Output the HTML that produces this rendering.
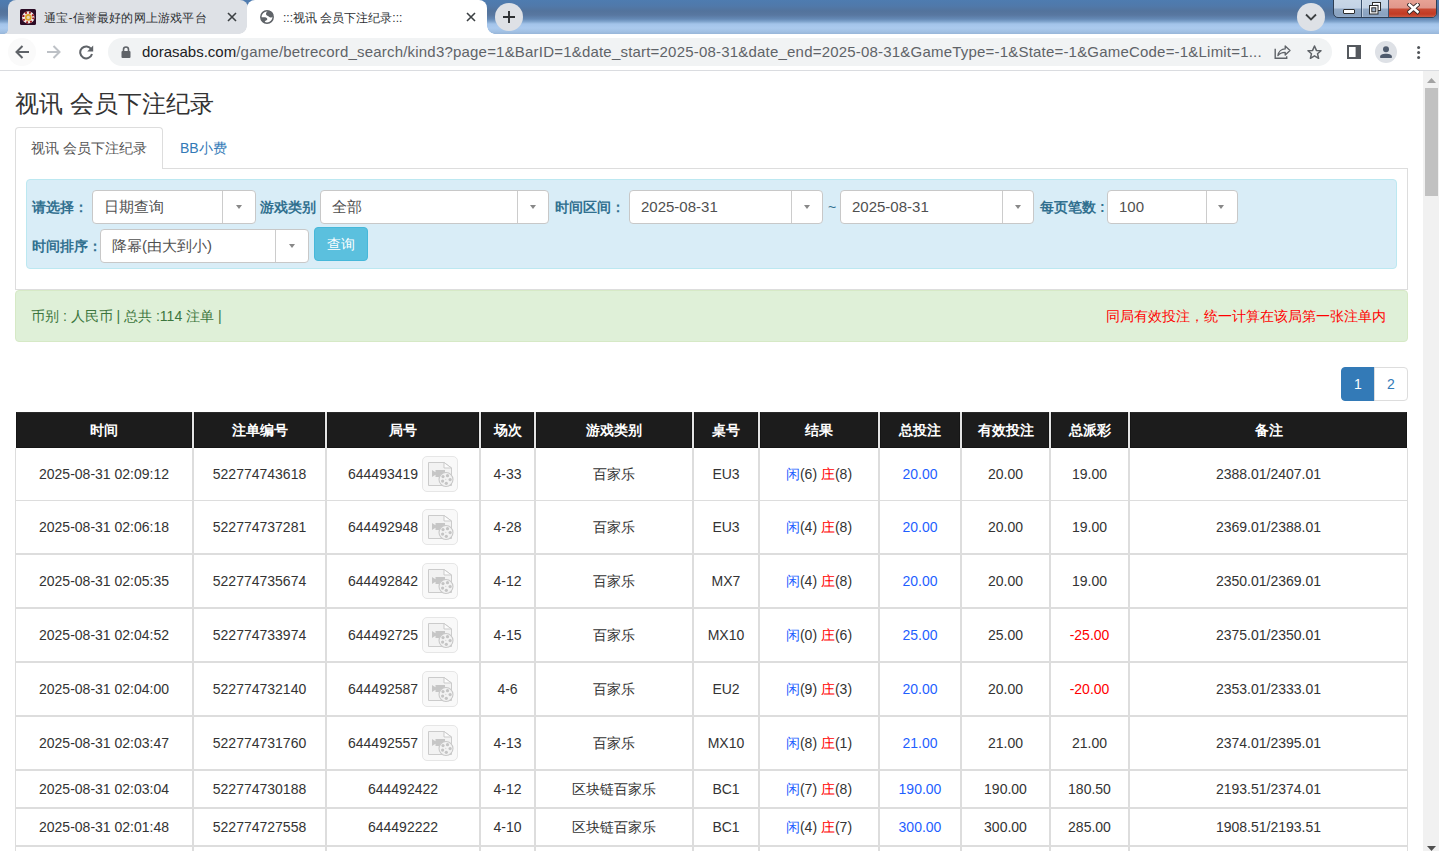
<!DOCTYPE html>
<html><head><meta charset="utf-8">
<style>
*{box-sizing:border-box;margin:0;padding:0}
html,body{width:1439px;height:851px;overflow:hidden;background:#fff;font-family:"Liberation Sans",sans-serif;color:#333}
.a{position:absolute}
#strip{left:0;top:0;width:1439px;height:34px;background:linear-gradient(to bottom,#4e7cb0 0px,#5079aa 6px,#53739c 11px,#5877a0 15px,#6489b5 19px,#7fa3cc 21.5px,#a3c4ea 24px,#abcaee 28px,#a0bfe2 32px,#97b5d8 34px)}
.tab{top:0;height:34px;border-radius:8px 8px 0 0}
.tt{position:absolute;font-size:12px;line-height:14px;white-space:nowrap;color:#2d3033}
#toolbar{left:0;top:34px;width:1439px;height:37px;background:#fff;border-bottom:1px solid #dadce0}
#omni{left:108px;top:38px;width:1224px;height:28px;border-radius:14px;background:#f1f3f4}
#url{position:absolute;left:142px;top:43px;font-size:15px;line-height:17px;color:#5f6368;white-space:nowrap;letter-spacing:0.2px}
#url b{font-weight:normal;color:#202124;letter-spacing:0}
#sb{left:1423px;top:71px;width:16px;height:780px;background:#f1f1f1}
.th{position:absolute;background:#1c1c1c;border:1px solid #151515;border-top-color:#2a2a2a;color:#fff;font-weight:bold;font-size:14px;line-height:34px;text-align:center;white-space:nowrap}
.td{position:absolute;display:flex;align-items:center;justify-content:center;font-size:14px;line-height:20px;white-space:nowrap;color:#333}
.vb{position:relative;display:inline-block;width:36px;height:36px;border:1px solid #e6e6e6;border-radius:5px;background:#f9f9f9;vertical-align:middle;margin-left:0}
.bl{color:#1f5fff}
.rd{color:#f00}
.lbl{position:absolute;font-weight:bold;font-size:14px;line-height:20px;color:#31708f;white-space:nowrap}
.sel{position:absolute;height:34px;border:1px solid #c8c8c8;border-radius:4px;background:#fff}
.sel .v{position:absolute;left:11px;top:7px;font-size:15px;line-height:18px;color:#505050;white-space:nowrap}
.sel .sep{position:absolute;top:0;bottom:0;width:1px;background:#ccc}
.sel .arr{position:absolute;top:14px;width:0;height:0;border-left:3.5px solid transparent;border-right:3.5px solid transparent;border-top:4px solid #888}
</style></head><body>
<div id="strip" class="a"></div>
<!-- inactive tab -->
<div class="a tab" style="left:8px;width:240px;background:#dee1e6"></div>
<div class="a" style="left:4px;top:30px;width:4px;height:4px;background:radial-gradient(circle at 0px 0px,transparent 3.5px,#dee1e6 4px)"></div>
<svg class="a" style="left:20px;top:9px" width="16" height="16" viewBox="0 0 16 16"><rect x="0" y="0" width="16" height="16" rx="1.5" fill="#2b0b25"/><circle cx="8.3" cy="8.4" r="6.2" fill="#f3ecec"/><circle cx="8.3" cy="8.4" r="5" fill="none" stroke="#9e1a1e" stroke-width="2" stroke-dasharray="1.9 2.03"/><circle cx="8.3" cy="8.4" r="3.3" fill="#dea52a"/><circle cx="8.3" cy="8.4" r="1.6" fill="#e9d9b8"/></svg>
<div class="tt" style="left:44px;top:11px;letter-spacing:0.2px">通宝-信誉最好的网上游戏平台</div>
<svg class="a" style="left:227px;top:12px" width="10" height="10" viewBox="0 0 10 10"><path d="M1 1 L9 9 M9 1 L1 9" stroke="#3c4043" stroke-width="1.6"/></svg>
<!-- active tab -->
<div class="a tab" style="left:247px;width:240px;background:#fff"></div>
<div class="a" style="left:487px;top:26px;width:8px;height:8px;background:radial-gradient(circle at 8px 0px,transparent 7.5px,#fff 8px)"></div>
<div class="a" style="left:239px;top:26px;width:8px;height:8px;background:radial-gradient(circle at 0px 0px,transparent 7.5px,#fff 8px)"></div>
<svg class="a" style="left:260px;top:10px" width="14" height="14" viewBox="0 0 14 14"><circle cx="7" cy="7" r="6.2" fill="none" stroke="#5f6368" stroke-width="1.5"/><path d="M7.9 0.8 C7 2 6 2.8 6 4 C6 5.2 7 5.6 8 6 C9 6.5 9.5 7.5 10.5 7.5 C11.5 7.5 12.5 7 13 6.5 L13.2 4 C12.2 2 10.5 0.8 7.9 0.8 Z" fill="#5f6368"/><path d="M0.8 7.3 L5 7.3 C6.5 7.3 7.3 8.3 7.3 9.3 C7.3 10.3 6 10.5 5.3 11 C4.7 11.5 4.7 12.2 4.8 13 C2.5 12 1 10 0.8 7.3 Z" fill="#5f6368"/></svg>
 <div class="tt" style="left:283px;top:11px">:::视讯 会员下注纪录:::</div>
<svg class="a" style="left:466px;top:12px" width="10" height="10" viewBox="0 0 10 10"><path d="M1 1 L9 9 M9 1 L1 9" stroke="#3c4043" stroke-width="1.6"/></svg>
<!-- new tab -->
<div class="a" style="left:495px;top:3px;width:28px;height:28px;border-radius:50%;background:#dee1e6"></div>
<svg class="a" style="left:503px;top:11px" width="12" height="12" viewBox="0 0 12 12"><path d="M6 0 V12 M0 6 H12" stroke="#2d3033" stroke-width="1.9"/></svg>
<!-- tab search -->
<div class="a" style="left:1297px;top:3px;width:28px;height:28px;border-radius:50%;background:#dee1e6"></div>
<svg class="a" style="left:1305px;top:13px" width="12" height="8" viewBox="0 0 12 8"><path d="M1 1.5 L6 6.5 L11 1.5" fill="none" stroke="#3c4043" stroke-width="1.8"/></svg>
<!-- window controls -->
<div class="a" style="left:1333px;top:-4px;width:104px;height:22px;border:1px solid #2e3f55;border-radius:0 0 5px 5px;overflow:hidden;background:linear-gradient(to bottom,#cbd9e8 0,#c3d3e5 11px,#93aac6 12px,#8aa2c0 18px,#9fb5d0 21px)">
 <div class="a" style="left:27px;top:0;width:1px;height:22px;background:#3b526e"></div>
 <div class="a" style="left:28px;top:0;width:1px;height:22px;background:#dfe8f2;opacity:.6"></div>
 <div class="a" style="left:54px;top:0;width:1px;height:22px;background:#3b526e"></div>
 <div class="a" style="left:55px;top:0;width:49px;height:22px;background:linear-gradient(to bottom,#eaa79a 0,#e0968a 11px,#c94a34 12px,#c23a24 17px,#d06650 21px)"></div>
 <div class="a" style="left:9px;top:12px;width:12px;height:5px;background:#fff;border:1px solid #2c2c2c;border-radius:1px"></div>
 <svg class="a" style="left:34px;top:5px" width="14" height="13" viewBox="0 0 14 13"><rect x="4.5" y="0.5" width="8" height="8" fill="#fff" stroke="#2c2c2c"/><rect x="6.5" y="2.5" width="4" height="4" fill="#9fb3cc" stroke="none"/><rect x="1.5" y="3.5" width="8.5" height="8.5" fill="#fff" stroke="#2c2c2c"/><rect x="3.8" y="5.8" width="4" height="4" fill="#9fb3cc" stroke="#2c2c2c" stroke-width="1"/></svg>
 <svg class="a" style="left:73px;top:6px" width="13" height="12" viewBox="0 0 13 12"><path d="M2.5 1.8 L10.5 8.8 M10.5 1.8 L2.5 8.8" stroke="#3a2a2a" stroke-width="4.4" stroke-linecap="square"/><path d="M2.5 1.8 L10.5 8.8 M10.5 1.8 L2.5 8.8" stroke="#fff" stroke-width="2.6" stroke-linecap="square"/></svg>
</div>

<div id="toolbar" class="a"></div>
<div class="a" style="left:8px;top:38px;width:28px;height:28px;border-radius:50%;background:#fafafa"></div>
<svg class="a" style="left:15px;top:45px" width="14" height="14" viewBox="0 0 14 14"><path d="M14 7 H2 M7.5 1 L1.5 7 L7.5 13" fill="none" stroke="#5f6368" stroke-width="2"/></svg>
<svg class="a" style="left:47px;top:45px" width="14" height="14" viewBox="0 0 14 14"><path d="M0 7 H12 M6.5 1 L12.5 7 L6.5 13" fill="none" stroke="#bdc1c6" stroke-width="2"/></svg>
<svg class="a" style="left:79px;top:45px" width="15" height="15" viewBox="0 0 15 15"><path d="M12.3 4.2 A6 6 0 1 0 13 9" fill="none" stroke="#5f6368" stroke-width="2"/><path d="M14.2 0.5 V6.5 H8.2 Z" fill="#5f6368"/></svg>
<div id="omni" class="a"></div>
<svg class="a" style="left:121px;top:46px" width="10" height="12" viewBox="0 0 10 12"><path d="M2.5 5 V3.5 A2.5 2.5 0 0 1 7.5 3.5 V5" fill="none" stroke="#5f6368" stroke-width="1.6"/><rect x="0.5" y="5" width="9" height="7" rx="1" fill="#5f6368"/></svg>
<div id="url"><b>dorasabs.com</b>/game/betrecord_search/kind3?page=1&amp;BarID=1&amp;date_start=2025-08-31&amp;date_end=2025-08-31&amp;GameType=-1&amp;State=-1&amp;GameCode=-1&amp;Limit=1...</div>
<svg class="a" style="left:1274px;top:44px" width="17" height="16" viewBox="0 0 17 16"><path d="M1.2 4.8 V14.2 H12.7 V12.2" fill="none" stroke="#5f6368" stroke-width="1.4"/><path d="M3.9 11.6 C4.5 7.6 7.5 4.9 11.2 4.9 V2 L16 6.5 L11.2 11 V8.3 C8 8.3 5.5 9.3 3.9 11.6 Z" fill="none" stroke="#5f6368" stroke-width="1.3" stroke-linejoin="round"/></svg>
<svg class="a" style="left:1307px;top:45px" width="15" height="15" viewBox="0 0 15 15"><path d="M7.5 1 L9.4 5.4 L14 5.7 L10.5 8.7 L11.6 13.3 L7.5 10.8 L3.4 13.3 L4.5 8.7 L1 5.7 L5.6 5.4 Z" fill="none" stroke="#5f6368" stroke-width="1.5" stroke-linejoin="round"/></svg>
<svg class="a" style="left:1347px;top:45px" width="14" height="14" viewBox="0 0 14 14"><rect x="1" y="1" width="12" height="12" fill="none" stroke="#55595e" stroke-width="2"/><rect x="8.6" y="1" width="4.4" height="12" fill="#55595e"/></svg>
<div class="a" style="left:1375px;top:41px;width:22px;height:22px;border-radius:50%;background:#dee1e6"></div>
<svg class="a" style="left:1379px;top:45px" width="14" height="14" viewBox="0 0 14 14"><circle cx="7" cy="4.2" r="3" fill="#4f5b6d"/><path d="M1.2 13 V11.3 C1.2 9.5 4 8.7 7 8.7 C10 8.7 12.8 9.5 12.8 11.3 V13 Z" fill="#4f5b6d"/></svg>
<svg class="a" style="left:1415px;top:45px" width="7" height="15" viewBox="0 0 7 15"><circle cx="3.6" cy="2.4" r="1.5" fill="#505458"/><circle cx="3.6" cy="7.4" r="1.5" fill="#505458"/><circle cx="3.6" cy="12.4" r="1.5" fill="#505458"/></svg>

<!-- scrollbar -->
<div id="sb" class="a"></div>
<svg class="a" style="left:1427px;top:78px" width="9" height="5" viewBox="0 0 9 5"><path d="M0 5 L4.5 0 L9 5Z" fill="#a3a3a3"/></svg>
<div class="a" style="left:1425px;top:88px;width:13px;height:108px;background:#c1c1c1"></div>
<svg class="a" style="left:1427px;top:846px" width="9" height="5" viewBox="0 0 9 5"><path d="M0 0 L4.5 5 L9 0Z" fill="#505050"/></svg>

<!-- PAGE -->
<div class="a" style="left:15px;top:86px;font-size:24px;line-height:36px;color:#333;white-space:nowrap;font-weight:500">视讯 会员下注纪录</div>

<!-- nav tabs -->
<div class="a" style="left:15px;top:168px;width:1393px;height:1px;background:#ddd"></div>
<div class="a" style="left:15px;top:127px;width:148px;height:42px;border:1px solid #ddd;border-bottom:none;border-radius:4px 4px 0 0;background:#fff"></div>
<div class="a" style="left:31px;top:138px;font-size:14px;line-height:20px;color:#555;white-space:nowrap">视讯 会员下注纪录</div>
<div class="a" style="left:180px;top:138px;font-size:14px;line-height:20px;color:#337ab7;white-space:nowrap">BB小费</div>
<!-- tab content panel -->
<div class="a" style="left:15px;top:169px;width:1393px;height:121px;border:1px solid #ddd;border-top:none"></div>
<!-- filter box -->
<div class="a" style="left:26px;top:179px;width:1371px;height:90px;background:#d9edf7;border:1px solid #bce8f1;border-radius:4px"></div>
<div class="lbl" style="left:32px;top:197px">请选择：</div>
<div class="sel" style="left:92px;top:190px;width:164px"><div class="v">日期查询</div><div class="sep" style="left:129px"></div><div class="arr" style="left:143px"></div></div>
<div class="lbl" style="left:260px;top:197px">游戏类别</div>
<div class="sel" style="left:320px;top:190px;width:229px"><div class="v">全部</div><div class="sep" style="left:196px"></div><div class="arr" style="left:209px"></div></div>
<div class="lbl" style="left:555px;top:197px">时间区间：</div>
<div class="sel" style="left:629px;top:190px;width:194px"><div class="v">2025-08-31</div><div class="sep" style="left:161px"></div><div class="arr" style="left:174px"></div></div>
<div class="a" style="left:828px;top:197px;font-size:14px;line-height:20px;color:#31708f">~</div>
<div class="sel" style="left:840px;top:190px;width:194px"><div class="v">2025-08-31</div><div class="sep" style="left:161px"></div><div class="arr" style="left:174px"></div></div>
<div class="lbl" style="left:1040px;top:197px">每页笔数 :</div>
<div class="sel" style="left:1107px;top:190px;width:131px"><div class="v">100</div><div class="sep" style="left:98px"></div><div class="arr" style="left:110px"></div></div>
<div class="lbl" style="left:32px;top:236px">时间排序：</div>
<div class="sel" style="left:100px;top:229px;width:209px"><div class="v">降幂(由大到小)</div><div class="sep" style="left:174px"></div><div class="arr" style="left:188px"></div></div>
<div class="a" style="left:314px;top:227px;width:54px;height:34px;border-radius:4px;background:#5bc0de;border:1px solid #46b8da;color:#fff;font-size:14px;line-height:32px;text-align:center;font-weight:500">查询</div>

<!-- alert -->
<div class="a" style="left:15px;top:290px;width:1393px;height:52px;background:#dff0d8;border:1px solid #d6e9c6;border-radius:4px"></div>
<div class="a" style="left:31px;top:306px;font-size:14px;line-height:20px;color:#3c763d;white-space:nowrap">币别 : 人民币 | 总共 :114 注单 |</div>
<div class="a" style="left:1106px;top:306px;font-size:14px;line-height:20px;color:#f00;white-space:nowrap">同局有效投注，统一计算在该局第一张注单内</div>

<!-- pagination -->
<div class="a" style="left:1341px;top:367px;width:34px;height:34px;background:#337ab7;border:1px solid #337ab7;border-radius:4px 0 0 4px;color:#fff;font-size:14px;line-height:32px;text-align:center">1</div>
<div class="a" style="left:1374px;top:367px;width:34px;height:34px;background:#fff;border:1px solid #ddd;border-radius:0 4px 4px 0;color:#337ab7;font-size:14px;line-height:32px;text-align:center">2</div>

<div class="a" style="left:16px;top:412px;width:1391px;height:36px;background:#e4e4e4"></div>
<div class="th" style="left:16px;top:412px;width:176px;height:36px">时间</div>
<div class="th" style="left:194px;top:412px;width:131px;height:36px">注单编号</div>
<div class="th" style="left:327px;top:412px;width:152px;height:36px">局号</div>
<div class="th" style="left:481px;top:412px;width:53px;height:36px">场次</div>
<div class="th" style="left:536px;top:412px;width:156px;height:36px">游戏类别</div>
<div class="th" style="left:694px;top:412px;width:64px;height:36px">桌号</div>
<div class="th" style="left:760px;top:412px;width:118px;height:36px">结果</div>
<div class="th" style="left:880px;top:412px;width:80px;height:36px">总投注</div>
<div class="th" style="left:962px;top:412px;width:87px;height:36px">有效投注</div>
<div class="th" style="left:1051px;top:412px;width:77px;height:36px">总派彩</div>
<div class="th" style="left:1130px;top:412px;width:277px;height:36px">备注</div>
<div class="a" style="left:15px;top:448px;width:1px;height:403px;background:#ddd"></div>
<div class="a" style="left:1407px;top:448px;width:1px;height:403px;background:#ddd"></div>
<div class="a" style="left:192px;top:448px;width:2px;height:403px;background:#ddd"></div>
<div class="a" style="left:325px;top:448px;width:2px;height:403px;background:#ddd"></div>
<div class="a" style="left:479px;top:448px;width:2px;height:403px;background:#ddd"></div>
<div class="a" style="left:534px;top:448px;width:2px;height:403px;background:#ddd"></div>
<div class="a" style="left:692px;top:448px;width:2px;height:403px;background:#ddd"></div>
<div class="a" style="left:758px;top:448px;width:2px;height:403px;background:#ddd"></div>
<div class="a" style="left:878px;top:448px;width:2px;height:403px;background:#ddd"></div>
<div class="a" style="left:960px;top:448px;width:2px;height:403px;background:#ddd"></div>
<div class="a" style="left:1049px;top:448px;width:2px;height:403px;background:#ddd"></div>
<div class="a" style="left:1128px;top:448px;width:2px;height:403px;background:#ddd"></div>
<div class="a" style="left:15px;top:500px;width:1393px;height:1px;background:#ddd"></div>
<div class="a" style="left:15px;top:553px;width:1393px;height:2px;background:#ddd"></div>
<div class="a" style="left:15px;top:607px;width:1393px;height:2px;background:#ddd"></div>
<div class="a" style="left:15px;top:661px;width:1393px;height:2px;background:#ddd"></div>
<div class="a" style="left:15px;top:715px;width:1393px;height:2px;background:#ddd"></div>
<div class="a" style="left:15px;top:769px;width:1393px;height:2px;background:#ddd"></div>
<div class="a" style="left:15px;top:807px;width:1393px;height:2px;background:#ddd"></div>
<div class="a" style="left:15px;top:845px;width:1393px;height:2px;background:#ddd"></div>
<div class="td" style="left:16px;top:448px;width:176px;height:52px"><span>2025-08-31 02:09:12</span></div>
<div class="td" style="left:194px;top:448px;width:131px;height:52px"><span>522774743618</span></div>
<div class="td" style="left:327px;top:448px;width:152px;height:52px"><span><span style="position:relative;top:1px">644493419</span> <span class="vb"><svg width="36" height="36" viewBox="0 0 36 36" style="position:absolute;left:-1px;top:-1px">
<path d="M6.5 6.5 H22 L29.5 12 V29.5 H6.5 Z" fill="#f2f2f2" stroke="#cbcbcb" stroke-width="1"/>
<path d="M22 6.5 V12 H29.5 Z" fill="#fcfcfc" stroke="#cbcbcb" stroke-width="1" stroke-linejoin="round"/>
<path d="M10 14 L13.5 16.3 V14 H23 V21 H13.5 V18.7 L10 21 Z" fill="#c6c6c6"/>
<circle cx="24" cy="23.5" r="7" fill="#f2f2f2" stroke="#c8c8c8" stroke-width="1.1"/>
<circle cx="21" cy="20.6" r="1.6" fill="#c4c4c4"/><circle cx="25.5" cy="19.7" r="1.6" fill="#c4c4c4"/>
<circle cx="28.1" cy="23.6" r="1.6" fill="#c4c4c4"/><circle cx="20.6" cy="25.1" r="1.6" fill="#c4c4c4"/>
<circle cx="24.3" cy="27.3" r="1.6" fill="#c4c4c4"/><circle cx="23.8" cy="23.3" r="0.5" fill="#c4c4c4"/>
</svg></span></span></div>
<div class="td" style="left:481px;top:448px;width:53px;height:52px"><span>4-33</span></div>
<div class="td" style="left:536px;top:448px;width:156px;height:52px"><span>百家乐</span></div>
<div class="td" style="left:694px;top:448px;width:64px;height:52px"><span>EU3</span></div>
<div class="td" style="left:760px;top:448px;width:118px;height:52px"><span><span class="bl">闲</span>(6) <span class="rd">庄</span>(8)</span></div>
<div class="td" style="left:880px;top:448px;width:80px;height:52px"><span><span class="bl">20.00</span></span></div>
<div class="td" style="left:962px;top:448px;width:87px;height:52px"><span>20.00</span></div>
<div class="td" style="left:1051px;top:448px;width:77px;height:52px"><span>19.00</span></div>
<div class="td" style="left:1130px;top:448px;width:277px;height:52px"><span>2388.01/2407.01</span></div>
<div class="td" style="left:16px;top:501px;width:176px;height:52px"><span>2025-08-31 02:06:18</span></div>
<div class="td" style="left:194px;top:501px;width:131px;height:52px"><span>522774737281</span></div>
<div class="td" style="left:327px;top:501px;width:152px;height:52px"><span><span style="position:relative;top:1px">644492948</span> <span class="vb"><svg width="36" height="36" viewBox="0 0 36 36" style="position:absolute;left:-1px;top:-1px">
<path d="M6.5 6.5 H22 L29.5 12 V29.5 H6.5 Z" fill="#f2f2f2" stroke="#cbcbcb" stroke-width="1"/>
<path d="M22 6.5 V12 H29.5 Z" fill="#fcfcfc" stroke="#cbcbcb" stroke-width="1" stroke-linejoin="round"/>
<path d="M10 14 L13.5 16.3 V14 H23 V21 H13.5 V18.7 L10 21 Z" fill="#c6c6c6"/>
<circle cx="24" cy="23.5" r="7" fill="#f2f2f2" stroke="#c8c8c8" stroke-width="1.1"/>
<circle cx="21" cy="20.6" r="1.6" fill="#c4c4c4"/><circle cx="25.5" cy="19.7" r="1.6" fill="#c4c4c4"/>
<circle cx="28.1" cy="23.6" r="1.6" fill="#c4c4c4"/><circle cx="20.6" cy="25.1" r="1.6" fill="#c4c4c4"/>
<circle cx="24.3" cy="27.3" r="1.6" fill="#c4c4c4"/><circle cx="23.8" cy="23.3" r="0.5" fill="#c4c4c4"/>
</svg></span></span></div>
<div class="td" style="left:481px;top:501px;width:53px;height:52px"><span>4-28</span></div>
<div class="td" style="left:536px;top:501px;width:156px;height:52px"><span>百家乐</span></div>
<div class="td" style="left:694px;top:501px;width:64px;height:52px"><span>EU3</span></div>
<div class="td" style="left:760px;top:501px;width:118px;height:52px"><span><span class="bl">闲</span>(4) <span class="rd">庄</span>(8)</span></div>
<div class="td" style="left:880px;top:501px;width:80px;height:52px"><span><span class="bl">20.00</span></span></div>
<div class="td" style="left:962px;top:501px;width:87px;height:52px"><span>20.00</span></div>
<div class="td" style="left:1051px;top:501px;width:77px;height:52px"><span>19.00</span></div>
<div class="td" style="left:1130px;top:501px;width:277px;height:52px"><span>2369.01/2388.01</span></div>
<div class="td" style="left:16px;top:555px;width:176px;height:52px"><span>2025-08-31 02:05:35</span></div>
<div class="td" style="left:194px;top:555px;width:131px;height:52px"><span>522774735674</span></div>
<div class="td" style="left:327px;top:555px;width:152px;height:52px"><span><span style="position:relative;top:1px">644492842</span> <span class="vb"><svg width="36" height="36" viewBox="0 0 36 36" style="position:absolute;left:-1px;top:-1px">
<path d="M6.5 6.5 H22 L29.5 12 V29.5 H6.5 Z" fill="#f2f2f2" stroke="#cbcbcb" stroke-width="1"/>
<path d="M22 6.5 V12 H29.5 Z" fill="#fcfcfc" stroke="#cbcbcb" stroke-width="1" stroke-linejoin="round"/>
<path d="M10 14 L13.5 16.3 V14 H23 V21 H13.5 V18.7 L10 21 Z" fill="#c6c6c6"/>
<circle cx="24" cy="23.5" r="7" fill="#f2f2f2" stroke="#c8c8c8" stroke-width="1.1"/>
<circle cx="21" cy="20.6" r="1.6" fill="#c4c4c4"/><circle cx="25.5" cy="19.7" r="1.6" fill="#c4c4c4"/>
<circle cx="28.1" cy="23.6" r="1.6" fill="#c4c4c4"/><circle cx="20.6" cy="25.1" r="1.6" fill="#c4c4c4"/>
<circle cx="24.3" cy="27.3" r="1.6" fill="#c4c4c4"/><circle cx="23.8" cy="23.3" r="0.5" fill="#c4c4c4"/>
</svg></span></span></div>
<div class="td" style="left:481px;top:555px;width:53px;height:52px"><span>4-12</span></div>
<div class="td" style="left:536px;top:555px;width:156px;height:52px"><span>百家乐</span></div>
<div class="td" style="left:694px;top:555px;width:64px;height:52px"><span>MX7</span></div>
<div class="td" style="left:760px;top:555px;width:118px;height:52px"><span><span class="bl">闲</span>(4) <span class="rd">庄</span>(8)</span></div>
<div class="td" style="left:880px;top:555px;width:80px;height:52px"><span><span class="bl">20.00</span></span></div>
<div class="td" style="left:962px;top:555px;width:87px;height:52px"><span>20.00</span></div>
<div class="td" style="left:1051px;top:555px;width:77px;height:52px"><span>19.00</span></div>
<div class="td" style="left:1130px;top:555px;width:277px;height:52px"><span>2350.01/2369.01</span></div>
<div class="td" style="left:16px;top:609px;width:176px;height:52px"><span>2025-08-31 02:04:52</span></div>
<div class="td" style="left:194px;top:609px;width:131px;height:52px"><span>522774733974</span></div>
<div class="td" style="left:327px;top:609px;width:152px;height:52px"><span><span style="position:relative;top:1px">644492725</span> <span class="vb"><svg width="36" height="36" viewBox="0 0 36 36" style="position:absolute;left:-1px;top:-1px">
<path d="M6.5 6.5 H22 L29.5 12 V29.5 H6.5 Z" fill="#f2f2f2" stroke="#cbcbcb" stroke-width="1"/>
<path d="M22 6.5 V12 H29.5 Z" fill="#fcfcfc" stroke="#cbcbcb" stroke-width="1" stroke-linejoin="round"/>
<path d="M10 14 L13.5 16.3 V14 H23 V21 H13.5 V18.7 L10 21 Z" fill="#c6c6c6"/>
<circle cx="24" cy="23.5" r="7" fill="#f2f2f2" stroke="#c8c8c8" stroke-width="1.1"/>
<circle cx="21" cy="20.6" r="1.6" fill="#c4c4c4"/><circle cx="25.5" cy="19.7" r="1.6" fill="#c4c4c4"/>
<circle cx="28.1" cy="23.6" r="1.6" fill="#c4c4c4"/><circle cx="20.6" cy="25.1" r="1.6" fill="#c4c4c4"/>
<circle cx="24.3" cy="27.3" r="1.6" fill="#c4c4c4"/><circle cx="23.8" cy="23.3" r="0.5" fill="#c4c4c4"/>
</svg></span></span></div>
<div class="td" style="left:481px;top:609px;width:53px;height:52px"><span>4-15</span></div>
<div class="td" style="left:536px;top:609px;width:156px;height:52px"><span>百家乐</span></div>
<div class="td" style="left:694px;top:609px;width:64px;height:52px"><span>MX10</span></div>
<div class="td" style="left:760px;top:609px;width:118px;height:52px"><span><span class="bl">闲</span>(0) <span class="rd">庄</span>(6)</span></div>
<div class="td" style="left:880px;top:609px;width:80px;height:52px"><span><span class="bl">25.00</span></span></div>
<div class="td" style="left:962px;top:609px;width:87px;height:52px"><span>25.00</span></div>
<div class="td" style="left:1051px;top:609px;width:77px;height:52px"><span><span class="rd">-25.00</span></span></div>
<div class="td" style="left:1130px;top:609px;width:277px;height:52px"><span>2375.01/2350.01</span></div>
<div class="td" style="left:16px;top:663px;width:176px;height:52px"><span>2025-08-31 02:04:00</span></div>
<div class="td" style="left:194px;top:663px;width:131px;height:52px"><span>522774732140</span></div>
<div class="td" style="left:327px;top:663px;width:152px;height:52px"><span><span style="position:relative;top:1px">644492587</span> <span class="vb"><svg width="36" height="36" viewBox="0 0 36 36" style="position:absolute;left:-1px;top:-1px">
<path d="M6.5 6.5 H22 L29.5 12 V29.5 H6.5 Z" fill="#f2f2f2" stroke="#cbcbcb" stroke-width="1"/>
<path d="M22 6.5 V12 H29.5 Z" fill="#fcfcfc" stroke="#cbcbcb" stroke-width="1" stroke-linejoin="round"/>
<path d="M10 14 L13.5 16.3 V14 H23 V21 H13.5 V18.7 L10 21 Z" fill="#c6c6c6"/>
<circle cx="24" cy="23.5" r="7" fill="#f2f2f2" stroke="#c8c8c8" stroke-width="1.1"/>
<circle cx="21" cy="20.6" r="1.6" fill="#c4c4c4"/><circle cx="25.5" cy="19.7" r="1.6" fill="#c4c4c4"/>
<circle cx="28.1" cy="23.6" r="1.6" fill="#c4c4c4"/><circle cx="20.6" cy="25.1" r="1.6" fill="#c4c4c4"/>
<circle cx="24.3" cy="27.3" r="1.6" fill="#c4c4c4"/><circle cx="23.8" cy="23.3" r="0.5" fill="#c4c4c4"/>
</svg></span></span></div>
<div class="td" style="left:481px;top:663px;width:53px;height:52px"><span>4-6</span></div>
<div class="td" style="left:536px;top:663px;width:156px;height:52px"><span>百家乐</span></div>
<div class="td" style="left:694px;top:663px;width:64px;height:52px"><span>EU2</span></div>
<div class="td" style="left:760px;top:663px;width:118px;height:52px"><span><span class="bl">闲</span>(9) <span class="rd">庄</span>(3)</span></div>
<div class="td" style="left:880px;top:663px;width:80px;height:52px"><span><span class="bl">20.00</span></span></div>
<div class="td" style="left:962px;top:663px;width:87px;height:52px"><span>20.00</span></div>
<div class="td" style="left:1051px;top:663px;width:77px;height:52px"><span><span class="rd">-20.00</span></span></div>
<div class="td" style="left:1130px;top:663px;width:277px;height:52px"><span>2353.01/2333.01</span></div>
<div class="td" style="left:16px;top:717px;width:176px;height:52px"><span>2025-08-31 02:03:47</span></div>
<div class="td" style="left:194px;top:717px;width:131px;height:52px"><span>522774731760</span></div>
<div class="td" style="left:327px;top:717px;width:152px;height:52px"><span><span style="position:relative;top:1px">644492557</span> <span class="vb"><svg width="36" height="36" viewBox="0 0 36 36" style="position:absolute;left:-1px;top:-1px">
<path d="M6.5 6.5 H22 L29.5 12 V29.5 H6.5 Z" fill="#f2f2f2" stroke="#cbcbcb" stroke-width="1"/>
<path d="M22 6.5 V12 H29.5 Z" fill="#fcfcfc" stroke="#cbcbcb" stroke-width="1" stroke-linejoin="round"/>
<path d="M10 14 L13.5 16.3 V14 H23 V21 H13.5 V18.7 L10 21 Z" fill="#c6c6c6"/>
<circle cx="24" cy="23.5" r="7" fill="#f2f2f2" stroke="#c8c8c8" stroke-width="1.1"/>
<circle cx="21" cy="20.6" r="1.6" fill="#c4c4c4"/><circle cx="25.5" cy="19.7" r="1.6" fill="#c4c4c4"/>
<circle cx="28.1" cy="23.6" r="1.6" fill="#c4c4c4"/><circle cx="20.6" cy="25.1" r="1.6" fill="#c4c4c4"/>
<circle cx="24.3" cy="27.3" r="1.6" fill="#c4c4c4"/><circle cx="23.8" cy="23.3" r="0.5" fill="#c4c4c4"/>
</svg></span></span></div>
<div class="td" style="left:481px;top:717px;width:53px;height:52px"><span>4-13</span></div>
<div class="td" style="left:536px;top:717px;width:156px;height:52px"><span>百家乐</span></div>
<div class="td" style="left:694px;top:717px;width:64px;height:52px"><span>MX10</span></div>
<div class="td" style="left:760px;top:717px;width:118px;height:52px"><span><span class="bl">闲</span>(8) <span class="rd">庄</span>(1)</span></div>
<div class="td" style="left:880px;top:717px;width:80px;height:52px"><span><span class="bl">21.00</span></span></div>
<div class="td" style="left:962px;top:717px;width:87px;height:52px"><span>21.00</span></div>
<div class="td" style="left:1051px;top:717px;width:77px;height:52px"><span>21.00</span></div>
<div class="td" style="left:1130px;top:717px;width:277px;height:52px"><span>2374.01/2395.01</span></div>
<div class="td" style="left:16px;top:771px;width:176px;height:36px"><span>2025-08-31 02:03:04</span></div>
<div class="td" style="left:194px;top:771px;width:131px;height:36px"><span>522774730188</span></div>
<div class="td" style="left:327px;top:771px;width:152px;height:36px"><span>644492422</span></div>
<div class="td" style="left:481px;top:771px;width:53px;height:36px"><span>4-12</span></div>
<div class="td" style="left:536px;top:771px;width:156px;height:36px"><span>区块链百家乐</span></div>
<div class="td" style="left:694px;top:771px;width:64px;height:36px"><span>BC1</span></div>
<div class="td" style="left:760px;top:771px;width:118px;height:36px"><span><span class="bl">闲</span>(7) <span class="rd">庄</span>(8)</span></div>
<div class="td" style="left:880px;top:771px;width:80px;height:36px"><span><span class="bl">190.00</span></span></div>
<div class="td" style="left:962px;top:771px;width:87px;height:36px"><span>190.00</span></div>
<div class="td" style="left:1051px;top:771px;width:77px;height:36px"><span>180.50</span></div>
<div class="td" style="left:1130px;top:771px;width:277px;height:36px"><span>2193.51/2374.01</span></div>
<div class="td" style="left:16px;top:809px;width:176px;height:36px"><span>2025-08-31 02:01:48</span></div>
<div class="td" style="left:194px;top:809px;width:131px;height:36px"><span>522774727558</span></div>
<div class="td" style="left:327px;top:809px;width:152px;height:36px"><span>644492222</span></div>
<div class="td" style="left:481px;top:809px;width:53px;height:36px"><span>4-10</span></div>
<div class="td" style="left:536px;top:809px;width:156px;height:36px"><span>区块链百家乐</span></div>
<div class="td" style="left:694px;top:809px;width:64px;height:36px"><span>BC1</span></div>
<div class="td" style="left:760px;top:809px;width:118px;height:36px"><span><span class="bl">闲</span>(4) <span class="rd">庄</span>(7)</span></div>
<div class="td" style="left:880px;top:809px;width:80px;height:36px"><span><span class="bl">300.00</span></span></div>
<div class="td" style="left:962px;top:809px;width:87px;height:36px"><span>300.00</span></div>
<div class="td" style="left:1051px;top:809px;width:77px;height:36px"><span>285.00</span></div>
<div class="td" style="left:1130px;top:809px;width:277px;height:36px"><span>1908.51/2193.51</span></div>
</body></html>
